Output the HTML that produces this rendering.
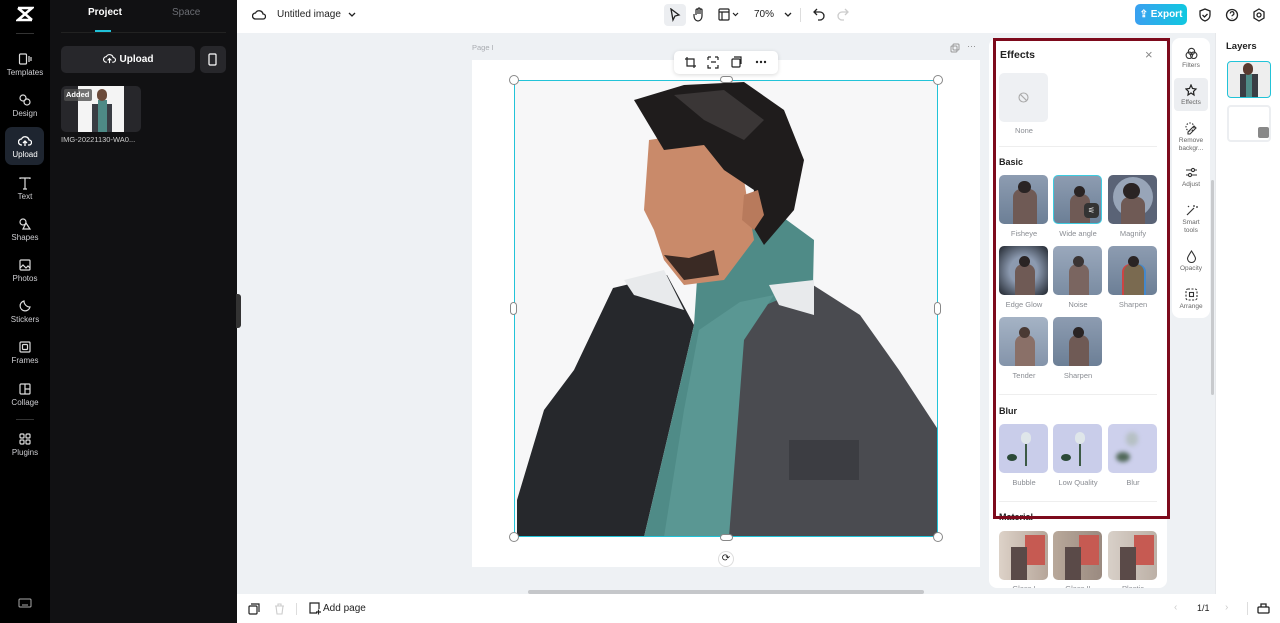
<!DOCTYPE html>
<html><head><meta charset="utf-8"><style>
*{box-sizing:border-box;margin:0;padding:0}
body{width:1280px;height:623px;overflow:hidden;font-family:"Liberation Sans",sans-serif;background:#eef1f4;position:relative}
.a{position:absolute}
.rail{left:0;top:0;width:50px;height:623px;background:#000}
.ri{position:absolute;left:0;width:50px;text-align:center;color:#cfcfd3;font-size:8px}
.ri svg{display:block;margin:0 auto 2px}
.panel{left:50px;top:0;width:187px;height:623px;background:#111113}
.top{left:237px;top:0;width:1043px;height:33px;background:#fff}
.bot{left:237px;top:594px;width:1043px;height:29px;background:#fff}
.eff{left:989px;top:38px;width:178px;height:550px;background:#fff;border-radius:8px;overflow:hidden}
.th{position:absolute;width:49px;height:49px;border-radius:5px;overflow:hidden}
.lb{position:absolute;width:60px;text-align:center;font-size:7.5px;color:#8a8d93}
.sec{position:absolute;left:10px;font-size:9px;font-weight:bold;color:#222}
.tools{left:1172px;top:38px;width:38px;height:280px;background:#fff;border-radius:8px}
.ti{position:absolute;left:0;width:38px;text-align:center;font-size:6.5px;color:#666;line-height:8px}
.ti svg{display:block;margin:0 auto 2px}
.layers{left:1215px;top:33px;width:65px;height:561px;background:#fff;border-left:1px solid #e6e8eb}
</style></head><body>

<div class="a rail">
  <svg class="a" style="left:16px;top:6px" width="18" height="16" viewBox="0 0 18 16"><path d="M2 2h14L2 14h14M2 2l14 12" stroke="#fff" stroke-width="2.6" fill="none"/></svg>
  <div class="a" style="left:16px;top:33px;width:18px;height:1px;background:#333"></div>
  <div class="ri" style="top:52px"><svg width="14" height="14" viewBox="0 0 14 14" fill="none" stroke="#ddd" stroke-width="1.2"><rect x="1.5" y="2" width="7" height="10" rx="1"/><path d="M11 4v6M13 5v4"/></svg>Templates</div>
  <div class="ri" style="top:93px"><svg width="14" height="14" viewBox="0 0 14 14" fill="none" stroke="#ddd" stroke-width="1.2"><circle cx="5" cy="5" r="3"/><circle cx="9" cy="9" r="3"/></svg>Design</div>
  <div class="a" style="left:5px;top:127px;width:39px;height:38px;background:#1e2530;border-radius:7px"></div>
  <div class="ri" style="top:134px;color:#fff"><svg width="14" height="14" viewBox="0 0 14 14" fill="none" stroke="#fff" stroke-width="1.3"><path d="M4 11H3.5a3 3 0 0 1 0-6 4 4 0 0 1 7.5 1 2.5 2.5 0 0 1 0 5H10M7 12V7M5 9l2-2 2 2"/></svg>Upload</div>
  <div class="ri" style="top:176px"><svg width="14" height="14" viewBox="0 0 14 14" fill="none" stroke="#ddd" stroke-width="1.2"><path d="M2 3V2h10v1M7 2v11M5 13h4"/></svg>Text</div>
  <div class="ri" style="top:217px"><svg width="14" height="14" viewBox="0 0 14 14" fill="none" stroke="#ddd" stroke-width="1.2"><circle cx="5" cy="5" r="3"/><path d="M8 6l4 6H5z"/></svg>Shapes</div>
  <div class="ri" style="top:258px"><svg width="14" height="14" viewBox="0 0 14 14" fill="none" stroke="#ddd" stroke-width="1.2"><rect x="2" y="2" width="10" height="10" rx="1"/><path d="M2 10l3-3 3 3 2-2 2 2"/></svg>Photos</div>
  <div class="ri" style="top:299px"><svg width="14" height="14" viewBox="0 0 14 14" fill="none" stroke="#ddd" stroke-width="1.2"><path d="M12 8A5 5 0 1 1 6 2a6 6 0 0 0 6 6z"/></svg>Stickers</div>
  <div class="ri" style="top:340px"><svg width="14" height="14" viewBox="0 0 14 14" fill="none" stroke="#ddd" stroke-width="1.2"><rect x="2" y="2" width="10" height="10" rx="1"/><rect x="4.5" y="4.5" width="5" height="5" rx="1"/></svg>Frames</div>
  <div class="ri" style="top:382px"><svg width="14" height="14" viewBox="0 0 14 14" fill="none" stroke="#ddd" stroke-width="1.2"><rect x="2" y="2" width="10" height="10" rx="1"/><path d="M7 2v10M7 7h5"/></svg>Collage</div>
  <div class="a" style="left:16px;top:419px;width:18px;height:1px;background:#333"></div>
  <div class="ri" style="top:432px"><svg width="14" height="14" viewBox="0 0 14 14" fill="none" stroke="#ddd" stroke-width="1.2"><rect x="2" y="2" width="4" height="4" rx="1"/><rect x="8" y="2" width="4" height="4" rx="1"/><rect x="2" y="8" width="4" height="4" rx="1"/><rect x="8" y="8" width="4" height="4" rx="1"/></svg>Plugins</div>
  <svg class="a" style="left:18px;top:598px" width="14" height="10" viewBox="0 0 14 10" fill="none" stroke="#aaa" stroke-width="1"><rect x="1" y="1" width="12" height="8" rx="1"/><path d="M4 7h6"/></svg>
</div>

<div class="a panel">
  <div class="a" style="left:38px;top:7px;font-size:10px;font-weight:bold;color:#fff">Project</div>
  <div class="a" style="left:122px;top:7px;font-size:10px;color:#6b6d73">Space</div>
  <div class="a" style="left:11px;top:32px;width:165px;height:1px;background:#222"></div>
  <div class="a" style="left:45px;top:30px;width:16px;height:2px;background:#20c0d8"></div>
  <div class="a" style="left:11px;top:46px;width:134px;height:27px;background:#27272b;border-radius:5px;color:#fff;font-size:10px;font-weight:bold;text-align:center;line-height:27px">
    <svg style="vertical-align:-2px;margin-right:4px" width="13" height="11" viewBox="0 0 14 12" fill="none" stroke="#fff" stroke-width="1.2"><path d="M4 10H3.5a3 3 0 0 1 0-6 4 4 0 0 1 7.5 1 2.5 2.5 0 0 1 0 5H10M7 11V6M5 8l2-2 2 2"/></svg>Upload</div>
  <div class="a" style="left:150px;top:46px;width:26px;height:27px;background:#27272b;border-radius:5px"><svg style="margin:7px 0 0 8px" width="10" height="13" viewBox="0 0 10 13" fill="none" stroke="#fff" stroke-width="1.2"><rect x="1" y="1" width="7" height="11" rx="1"/></svg></div>
  <div class="a" style="left:11px;top:86px;width:80px;height:46px;background:#27272b;border-radius:5px;overflow:hidden">
    <div class="a" style="left:17px;top:0;width:46px;height:46px;background:#f4f4f4"></div>
    <div class="a" style="left:31px;top:18px;width:20px;height:28px;background:#3a3d44"></div>
    <div class="a" style="left:37px;top:14px;width:9px;height:32px;background:#4e8a86"></div>
    <div class="a" style="left:36px;top:3px;width:10px;height:12px;border-radius:5px;background:#6b4a3a"></div>
    <div class="a" style="left:3px;top:3px;width:28px;height:12px;background:rgba(80,80,80,.8);border-radius:2px;color:#fff;font-size:7.5px;font-weight:bold;line-height:12px;padding-left:2px">Added</div>
  </div>
  <div class="a" style="left:11px;top:135px;font-size:7.5px;color:#ccc">IMG-20221130-WA0...</div>
</div>
<div class="a" style="left:236px;top:294px;width:5px;height:34px;background:#333;border-radius:0 3px 3px 0"></div>

<div class="a top">
  <svg class="a" style="left:15px;top:8px" width="14" height="14" viewBox="0 0 14 14" fill="none" stroke="#222" stroke-width="1.3"><path d="M3.5 11a3 3 0 0 1 0-6 4 4 0 0 1 7.5 1 2.5 2.5 0 0 1 0 5z"/></svg>
  <div class="a" style="left:40px;top:9px;font-size:10px;color:#222">Untitled image</div>
  <svg class="a" style="left:111px;top:12px" width="8" height="6" viewBox="0 0 8 6"><path d="M1 1l3 3 3-3" stroke="#222" fill="none" stroke-width="1.3"/></svg>
  <div class="a" style="left:427px;top:4px;width:22px;height:22px;background:#eceef1;border-radius:4px"></div>
  <svg class="a" style="left:432px;top:8px" width="12" height="14" viewBox="0 0 12 14"><path d="M2 1l8 6-4 1-2 4z" fill="none" stroke="#222" stroke-width="1.3"/></svg>
  <svg class="a" style="left:456px;top:7px" width="12" height="15" viewBox="0 0 12 15"><path d="M3 8V3a1 1 0 0 1 2 0v4V2a1 1 0 0 1 2 0v5V3a1 1 0 0 1 2 0v6c0 3-2 5-4 5S1 12 1 9V7" fill="none" stroke="#222" stroke-width="1.2"/></svg>
  <svg class="a" style="left:481px;top:8px" width="22" height="13" viewBox="0 0 22 13"><rect x="1" y="1" width="10" height="11" rx="1" fill="none" stroke="#222" stroke-width="1.2"/><path d="M1 4h10M4 4v8M15 5l2.5 2.5L20 5" fill="none" stroke="#222" stroke-width="1.2"/></svg>
  <div class="a" style="left:517px;top:9px;font-size:10px;color:#222">70%</div>
  <svg class="a" style="left:547px;top:12px" width="8" height="6" viewBox="0 0 8 6"><path d="M1 1l3 3 3-3" stroke="#222" fill="none" stroke-width="1.3"/></svg>
  <div class="a" style="left:563px;top:8px;width:1px;height:14px;background:#ddd"></div>
  <svg class="a" style="left:576px;top:8px" width="12" height="13" viewBox="0 0 12 13"><path d="M4 1L1 4l3 3M1 4h6a4 4 0 0 1 0 8H5" fill="none" stroke="#222" stroke-width="1.3"/></svg>
  <svg class="a" style="left:600px;top:8px" width="12" height="13" viewBox="0 0 12 13"><path d="M8 1l3 3-3 3M11 4H5a4 4 0 0 0 0 8h2" fill="none" stroke="#ccc" stroke-width="1.3"/></svg>
  <div class="a" style="left:898px;top:4px;width:52px;height:21px;border-radius:5px;background:linear-gradient(90deg,#3aa0f0,#10c8e0);color:#fff;font-size:10px;font-weight:bold;line-height:21px;text-align:center">&#x21EA; Export</div>
  <svg class="a" style="left:962px;top:8px" width="12" height="14" viewBox="0 0 12 14"><path d="M6 1l5 2v4c0 3-2 5-5 6-3-1-5-3-5-6V3z M3.5 7l2 2 3-3" fill="none" stroke="#222" stroke-width="1.3"/></svg>
  <svg class="a" style="left:988px;top:8px" width="14" height="14" viewBox="0 0 14 14"><circle cx="7" cy="7" r="5.5" fill="none" stroke="#222" stroke-width="1.3"/><path d="M5.3 5.5a1.8 1.8 0 1 1 2.3 1.7c-.5.2-.6.5-.6 1.1M7 10v.5" fill="none" stroke="#222" stroke-width="1.2"/></svg>
  <svg class="a" style="left:1015px;top:8px" width="14" height="14" viewBox="0 0 14 14"><path d="M7 1l5 3v6l-5 3-5-3V4z" fill="none" stroke="#222" stroke-width="1.3"/><circle cx="7" cy="7" r="2" fill="none" stroke="#222" stroke-width="1.3"/></svg>
</div>

<!-- canvas -->
<div class="a" style="left:472px;top:43px;font-size:7.5px;color:#a8abb0">Page I</div>
<svg class="a" style="left:950px;top:43px" width="10" height="10" viewBox="0 0 10 10"><rect x="1" y="3" width="6" height="6" rx="1" fill="none" stroke="#999"/><rect x="3" y="1" width="6" height="6" rx="1" fill="none" stroke="#999"/></svg>
<div class="a" style="left:967px;top:41px;font-size:9px;color:#888">···</div>
<div class="a" style="left:472px;top:60px;width:508px;height:507px;background:#fff"></div>
<div class="a" style="left:674px;top:51px;width:104px;height:23px;background:#fff;border-radius:5px;box-shadow:0 1px 4px rgba(0,0,0,.15)"></div>
<svg class="a" style="left:684px;top:56px" width="90" height="13" viewBox="0 0 90 13" fill="none" stroke="#222" stroke-width="1.2"><path d="M3 1v9h9M1 3h9v9"/><path d="M24 1h3M31 1h3M24 1v3M34 1v3M24 9v3h3M34 9v3h-3M27 6h5"/><rect x="48" y="3" width="8" height="8" rx="1"/><path d="M50 1h7v7"/><circle cx="73" cy="6" r=".6" fill="#222"/><circle cx="77" cy="6" r=".6" fill="#222"/><circle cx="81" cy="6" r=".6" fill="#222"/></svg>

<svg class="a" style="left:514px;top:80px" width="424" height="457" viewBox="0 0 424 457">
  <rect width="424" height="457" fill="#f7f7f8"/>
  <path d="M3 457V420L30 330 60 290 99 208 153 195 180 245 160 330 130 457z" fill="#26282c"/>
  <path d="M226 222L299 205 346 235 385 290 423 348V457H203z" fill="#4a4b50"/>
  <path d="M185 170L215 135 270 138 300 160 299 205 240 230 200 300 180 457H130L160 330 180 245z" fill="#4f8b87"/>
  <path d="M226 222L260 215 230 260 215 457H150L170 330 185 250z" fill="#5a9793"/>
  <path d="M110 200L150 190 170 230 120 215z" fill="#e8eaec"/>
  <path d="M255 205L300 200 300 235 265 225z" fill="#e8eaec"/>
  <path d="M135 60L200 50 230 100 240 160 210 200 170 205 150 180 140 150 130 130z" fill="#c98a6a"/>
  <path d="M150 175L170 200 205 195 200 170 175 178z" fill="#3a2a24"/>
  <path d="M120 20L170 5 230 2 270 30 290 80 280 130 250 165 235 140 240 110 210 90 190 65 150 70 135 45z" fill="#1f1c1c"/>
  <path d="M160 15L210 10 250 40 230 60 190 40z" fill="#3a3636"/>
  <path d="M230 115l14-5 6 25-10 15-12-10z" fill="#b87a5c"/>
  <path d="M275 360h70v40h-70z" fill="#3c3d42"/>
</svg>
<div class="a" style="left:514px;top:80px;width:424px;height:457px;border:1.5px solid #22c3d8"></div>
<div class="a" style="left:509px;top:75px;width:10px;height:10px;border-radius:50%;background:#fff;border:1px solid #888"></div>
<div class="a" style="left:933px;top:75px;width:10px;height:10px;border-radius:50%;background:#fff;border:1px solid #888"></div>
<div class="a" style="left:509px;top:532px;width:10px;height:10px;border-radius:50%;background:#fff;border:1px solid #888"></div>
<div class="a" style="left:933px;top:532px;width:10px;height:10px;border-radius:50%;background:#fff;border:1px solid #888"></div>
<div class="a" style="left:720px;top:76px;width:13px;height:7px;border-radius:4px;background:#fff;border:1px solid #888"></div>
<div class="a" style="left:720px;top:534px;width:13px;height:7px;border-radius:4px;background:#fff;border:1px solid #888"></div>
<div class="a" style="left:510px;top:302px;width:7px;height:13px;border-radius:4px;background:#fff;border:1px solid #888"></div>
<div class="a" style="left:934px;top:302px;width:7px;height:13px;border-radius:4px;background:#fff;border:1px solid #888"></div>
<div class="a" style="left:718px;top:551px;width:16px;height:16px;border-radius:50%;background:#fff;border:1px solid #ddd;font-size:10px;text-align:center;line-height:14px;color:#222">⟳</div>
<div class="a" style="left:528px;top:590px;width:396px;height:4px;border-radius:2px;background:#c5c7ca"></div>

<div class="a bot">
  <svg class="a" style="left:11px;top:9px" width="12" height="12" viewBox="0 0 12 12" fill="none" stroke="#222" stroke-width="1.2"><rect x="1" y="3" width="8" height="8" rx="1"/><path d="M3 1h8v8"/></svg>
  <svg class="a" style="left:37px;top:9px" width="11" height="12" viewBox="0 0 11 12" fill="none" stroke="#ccc" stroke-width="1.1"><path d="M1 3h9M2 3l1 8h5l1-8M4 3V1h3v2"/></svg>
  <div class="a" style="left:59px;top:9px;width:1px;height:12px;background:#ddd"></div>
  <svg class="a" style="left:71px;top:8px" width="13" height="13" viewBox="0 0 13 13" fill="none" stroke="#222" stroke-width="1.2"><path d="M9 11H2V1h9v6M8 10h5M10.5 7.5v5"/></svg>
  <div class="a" style="left:86px;top:9px;font-size:10px;color:#222">Add page</div>
  <div class="a" style="left:937px;top:8px;font-size:10px;color:#ccc">‹</div>
  <div class="a" style="left:960px;top:9px;font-size:9px;color:#222">1/1</div>
  <div class="a" style="left:988px;top:8px;font-size:10px;color:#ccc">›</div>
  <div class="a" style="left:1010px;top:8px;width:1px;height:13px;background:#ddd"></div>
  <svg class="a" style="left:1020px;top:8px" width="13" height="12" viewBox="0 0 13 12" fill="none" stroke="#222" stroke-width="1.3"><rect x="1" y="5" width="11" height="6" rx="1"/><path d="M4 5V2h5v3"/></svg>
</div>

<!-- effects -->
<div class="a eff">
  <div class="a" style="left:11px;top:11px;font-size:10.5px;font-weight:bold;color:#222">Effects</div>
  <div class="a" style="left:156px;top:9px;font-size:13px;color:#888">×</div>
  <div class="a" style="left:10px;top:35px;width:49px;height:49px;border-radius:5px;background:#eef0f3"></div>
  <svg class="a" style="left:29px;top:54px" width="11" height="11" viewBox="0 0 11 11" fill="none" stroke="#aaa" stroke-width="1.1"><circle cx="5.5" cy="5.5" r="4.5"/><path d="M2.3 2.3l6.4 6.4"/></svg>
  <div class="lb" style="left:5px;top:88px">None</div>
  <div class="a" style="left:10px;top:108px;width:158px;height:1px;background:#eee"></div>
  <div class="sec" style="top:119px">Basic</div>
  <!-- row 1 -->
  <div class="th" style="left:10px;top:137px;background:linear-gradient(#8d9cb1,#6c7f96)"><div class="a" style="left:14px;top:14px;width:24px;height:35px;background:#6f5a55;border-radius:8px 8px 0 0"></div><div class="a" style="left:19px;top:6px;width:13px;height:12px;border-radius:6px;background:#2a2424"></div></div>
  <div class="lb" style="left:5px;top:191px">Fisheye</div>
  <div class="th" style="left:64px;top:137px;background:linear-gradient(#8d9cb1,#6c7f96);border:1.5px solid #3ecbe0"><div class="a" style="left:16px;top:18px;width:20px;height:31px;background:#6f5a55;border-radius:8px 8px 0 0"></div><div class="a" style="left:20px;top:10px;width:11px;height:11px;border-radius:6px;background:#2a2424"></div><div class="a" style="left:30px;top:27px;width:15px;height:15px;border-radius:4px;background:#333;color:#fff;font-size:8px;text-align:center;line-height:15px">⚟</div></div>
  <div class="lb" style="left:59px;top:191px">Wide angle</div>
  <div class="th" style="left:119px;top:137px;background:#5a6376"><div class="a" style="left:5px;top:2px;width:40px;height:40px;border-radius:50%;background:#98a5b8"></div><div class="a" style="left:13px;top:22px;width:24px;height:27px;background:#6f5a55;border-radius:8px 8px 0 0"></div><div class="a" style="left:15px;top:8px;width:17px;height:16px;border-radius:8px;background:#2a2424"></div></div>
  <div class="lb" style="left:114px;top:191px">Magnify</div>
  <!-- row 2 -->
  <div class="th" style="left:10px;top:208px;background:radial-gradient(#8c9ab0 40%,#1f242c)"><div class="a" style="left:16px;top:18px;width:20px;height:31px;background:#6f5a55;border-radius:8px 8px 0 0"></div><div class="a" style="left:20px;top:10px;width:11px;height:11px;border-radius:6px;background:#2a2424"></div></div>
  <div class="lb" style="left:5px;top:262px">Edge Glow</div>
  <div class="th" style="left:64px;top:208px;background:linear-gradient(#9aa8bc,#7a8ca2)"><div class="a" style="left:16px;top:18px;width:20px;height:31px;background:#7a6560;border-radius:8px 8px 0 0"></div><div class="a" style="left:20px;top:10px;width:11px;height:11px;border-radius:6px;background:#3a3434"></div></div>
  <div class="lb" style="left:59px;top:262px">Noise</div>
  <div class="th" style="left:119px;top:208px;background:linear-gradient(#8d9cb1,#6c7f96)"><div class="a" style="left:16px;top:18px;width:20px;height:31px;background:#7a6a50;border-radius:8px 8px 0 0;box-shadow:-2px 0 #c44,2px 0 #48c"></div><div class="a" style="left:20px;top:10px;width:11px;height:11px;border-radius:6px;background:#2a2424"></div></div>
  <div class="lb" style="left:114px;top:262px">Sharpen</div>
  <!-- row 3 -->
  <div class="th" style="left:10px;top:279px;background:linear-gradient(#a5b3c5,#8494aa)"><div class="a" style="left:16px;top:18px;width:20px;height:31px;background:#8a7068;border-radius:8px 8px 0 0"></div><div class="a" style="left:20px;top:10px;width:11px;height:11px;border-radius:6px;background:#4a3a34"></div></div>
  <div class="lb" style="left:5px;top:333px">Tender</div>
  <div class="th" style="left:64px;top:279px;background:linear-gradient(#8d9cb1,#6c7f96)"><div class="a" style="left:16px;top:18px;width:20px;height:31px;background:#6f5a55;border-radius:8px 8px 0 0"></div><div class="a" style="left:20px;top:10px;width:11px;height:11px;border-radius:6px;background:#2a2424"></div></div>
  <div class="lb" style="left:59px;top:333px">Sharpen</div>
  <div class="a" style="left:10px;top:356px;width:158px;height:1px;background:#eee"></div>
  <div class="sec" style="top:368px">Blur</div>
  <div class="th" style="left:10px;top:386px;background:#c9cdea"><div class="a" style="left:22px;top:8px;width:10px;height:12px;border-radius:5px;background:#dfe6ea"></div><div class="a" style="left:26px;top:20px;width:1.5px;height:22px;background:#3c5a46"></div><div class="a" style="left:8px;top:30px;width:10px;height:7px;border-radius:50%;background:#2c4a38"></div></div>
  <div class="lb" style="left:5px;top:440px">Bubble</div>
  <div class="th" style="left:64px;top:386px;background:#c9cdea"><div class="a" style="left:22px;top:8px;width:10px;height:12px;border-radius:5px;background:#dfe6ea"></div><div class="a" style="left:26px;top:20px;width:1.5px;height:22px;background:#3c5a46"></div><div class="a" style="left:8px;top:30px;width:10px;height:7px;border-radius:50%;background:#2c4a38"></div></div>
  <div class="lb" style="left:59px;top:440px">Low Quality</div>
  <div class="th" style="left:119px;top:386px;background:#cdd0ec"><div class="a" style="left:18px;top:8px;width:12px;height:14px;border-radius:6px;background:#b6c0c4;filter:blur(2px)"></div><div class="a" style="left:8px;top:28px;width:14px;height:10px;border-radius:50%;background:#506858;filter:blur(2px)"></div></div>
  <div class="lb" style="left:114px;top:440px">Blur</div>
  <div class="a" style="left:10px;top:463px;width:158px;height:1px;background:#eee"></div>
  <div class="sec" style="top:474px">Material</div>
  <div class="th" style="left:10px;top:493px;background:linear-gradient(90deg,#ddd2c8,#b6a69a)"><div class="a" style="left:26px;top:4px;width:20px;height:30px;background:#c65a52"></div><div class="a" style="left:12px;top:16px;width:16px;height:33px;background:#5a4a48"></div></div>
  <div class="lb" style="left:5px;top:546px">Glass I</div>
  <div class="th" style="left:64px;top:493px;background:linear-gradient(90deg,#b8a89a,#9a8a80)"><div class="a" style="left:26px;top:4px;width:20px;height:30px;background:#c65a52"></div><div class="a" style="left:12px;top:16px;width:16px;height:33px;background:#5a4a48"></div></div>
  <div class="lb" style="left:59px;top:546px">Glass II</div>
  <div class="th" style="left:119px;top:493px;background:linear-gradient(90deg,#d8d0c8,#bcb0a6)"><div class="a" style="left:26px;top:4px;width:20px;height:30px;background:#c65a52"></div><div class="a" style="left:12px;top:16px;width:16px;height:33px;background:#5a4a48"></div></div>
  <div class="lb" style="left:114px;top:546px">Plastic</div>
</div>
<div class="a" style="left:993px;top:38px;width:177px;height:481px;border:3px solid #7d0a1c"></div>

<div class="a tools">
  <div class="ti" style="top:9px"><svg width="13" height="13" viewBox="0 0 13 13" fill="none" stroke="#333" stroke-width="1.1"><circle cx="6.5" cy="4.5" r="3.2"/><circle cx="4.3" cy="8.3" r="3.2"/><circle cx="8.7" cy="8.3" r="3.2"/></svg>Filters</div>
  <div class="a" style="left:2px;top:40px;width:34px;height:33px;background:#eceef1;border-radius:4px"></div>
  <div class="ti" style="top:46px"><svg width="13" height="13" viewBox="0 0 13 13" fill="none" stroke="#222" stroke-width="1.2"><path d="M6 1l1.5 3.5L11 5 8.5 7.5 9 11 6 9 3 11l.5-3.5L1 5l3.5-.5z"/></svg>Effects</div>
  <div class="ti" style="top:84px"><svg width="13" height="13" viewBox="0 0 13 13" fill="none" stroke="#333" stroke-width="1.1"><path d="M3 10l6-6 2 2-6 6H3z" /><circle cx="5" cy="5" r="4" stroke-dasharray="1.5 1.5"/></svg>Remove<br>backgr...</div>
  <div class="ti" style="top:128px"><svg width="13" height="13" viewBox="0 0 13 13" fill="none" stroke="#333" stroke-width="1.1"><path d="M1 4h11M1 9h11"/><circle cx="8" cy="4" r="1.6" fill="#fff"/><circle cx="5" cy="9" r="1.6" fill="#fff"/></svg>Adjust</div>
  <div class="ti" style="top:166px"><svg width="13" height="13" viewBox="0 0 13 13" fill="none" stroke="#333" stroke-width="1.2"><path d="M2 11l7-7M9 1v2M11 3h2M3 2l1 1"/></svg>Smart<br>tools</div>
  <div class="ti" style="top:212px"><svg width="13" height="13" viewBox="0 0 13 13" fill="none" stroke="#333" stroke-width="1.1"><path d="M6.5 1C4 5 2.5 7 2.5 8.5a4 4 0 0 0 8 0C10.5 7 9 5 6.5 1z"/></svg>Opacity</div>
  <div class="ti" style="top:250px"><svg width="13" height="13" viewBox="0 0 13 13" fill="none" stroke="#333" stroke-width="1.1"><rect x="1" y="1" width="11" height="11" rx="2" stroke-dasharray="2 1.5"/><rect x="4.5" y="4.5" width="4" height="4"/></svg>Arrange</div>
</div>
<div class="a" style="left:1211px;top:180px;width:3px;height:215px;background:#c8cacd;border-radius:2px"></div>

<div class="a layers">
  <div class="a" style="left:10px;top:8px;font-size:9.5px;font-weight:bold;color:#222">Layers</div>
  <div class="a" style="left:11px;top:28px;width:44px;height:37px;border:1.5px solid #22c3d8;border-radius:4px;background:#eee;overflow:hidden">
    <div class="a" style="left:12px;top:12px;width:18px;height:24px;background:#3a3d44"></div>
    <div class="a" style="left:18px;top:12px;width:6px;height:24px;background:#4f8b87"></div>
    <div class="a" style="left:15px;top:1px;width:10px;height:12px;border-radius:5px;background:#5a3a30"></div>
  </div>
  <div class="a" style="left:11px;top:72px;width:44px;height:37px;border:2px solid #eceef1;border-radius:4px;background:#fff"><div class="a" style="left:29px;top:20px;width:11px;height:11px;border-radius:2px;background:#888"></div></div>
</div>

</body></html>
